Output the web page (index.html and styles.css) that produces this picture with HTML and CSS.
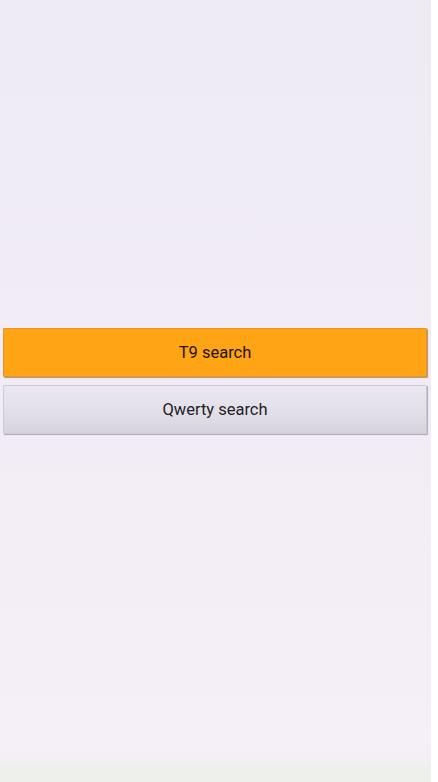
FILE: index.html
```html
<!DOCTYPE html>
<html>
<head>
<meta charset="utf-8">
<link rel="stylesheet" href="styles.css">
</head>
<body>
<div class="screen">
  <div class="buttons">
    <div class="btn btn-primary">T9 search</div>
    <div class="btn btn-secondary">Qwerty search</div>
  </div>
</div>
</body>
</html>
```
FILE: styles.css
```css
html, body {
  margin: 0;
  padding: 0;
  height: 100%;
  background: #ffffff;
}
body {
  font-family: Roboto, "Liberation Sans", sans-serif;
}
.screen {
  width: 431px;
  height: 782px;
  box-sizing: border-box;
  background: linear-gradient(180deg, #efebf5 0%, #f1ecf5 50%, #f5eff7 95%, #f3eff5 97.6%, #eef0ec 98%, #eef0ec 100%);
  padding: 328px 4px 0 3px;
}
.buttons {
  display: flex;
  flex-direction: column;
  gap: 8px;
}
.btn {
  height: 49px;
  box-sizing: border-box;
  display: flex;
  align-items: center;
  justify-content: center;
  font-size: 16.5px;
  border-radius: 1px;
}
.btn-primary {
  background: #fea415;
  color: #1c1408;
  border: 1px solid #e9951a;
  box-shadow: 1px 1px 1px rgba(120, 80, 40, 0.55);
}
.btn-secondary {
  background: linear-gradient(180deg, #ebe8f1 0%, #e1dee8 60%, #d6d3de 100%);
  color: #222226;
  border: 1px solid #cdc9d4;
  box-shadow: 1px 1px 1px rgba(110, 100, 120, 0.5);
}
```
